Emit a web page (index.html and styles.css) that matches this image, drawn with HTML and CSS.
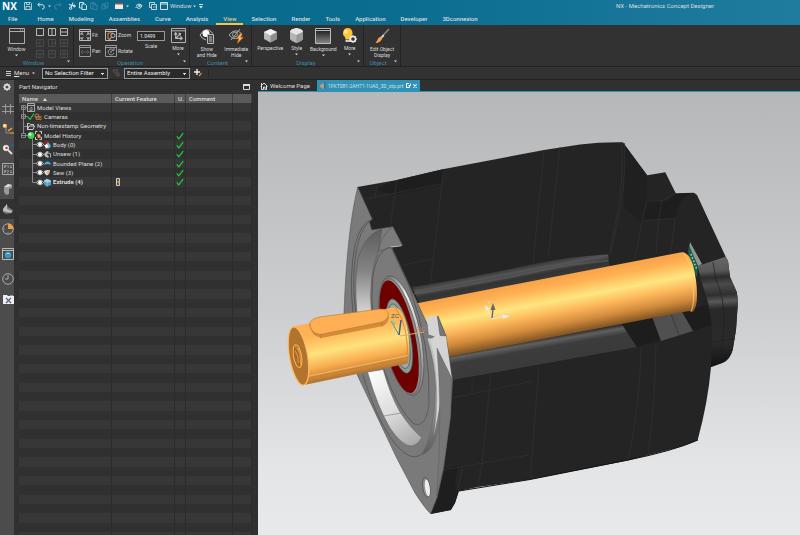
FILE: index.html
```html
<!DOCTYPE html>
<html lang="en">
<head>
<meta charset="utf-8">
<title>NX - Mechatronics Concept Designer</title>
<link rel="stylesheet" href="styles.css">
</head>
<body>
<svg class="defs" width="0" height="0" aria-hidden="true">
  <defs>
    <symbol id="caret" viewBox="0 0 4 3"><path d="M0 0h4L2 2.5z" fill="#ddd"/></symbol>
    <symbol id="tick" viewBox="0 0 8 8"><path d="M.8 4.4 2.8 6.8 7.2 1.2" fill="none" stroke="#1fd13a" stroke-width="1.2"/></symbol>
    <symbol id="eye" viewBox="0 0 8 8"><path d="M.3 4Q4-.6 7.7 4 4 8.6.3 4z" fill="#333" stroke="#ddd" stroke-width=".8"/><circle cx="4" cy="4" r="2" fill="#fff"/></symbol>
  </defs>
</svg>

<header class="top">
  <div class="titlebar">
    <strong class="logo">NX</strong>
    <div class="quick">
      <button aria-label="Save"><svg width="8" height="8" viewBox="0 0 8 8" fill="none" stroke="#cfe3ea"><path d="M.5.5h6l1 1v6h-7zM2.500.5v2h3v-2M2 7.500v-3h4v3" stroke-width=".8"/></svg></button>
      <button class="undo" aria-label="Undo"><svg width="8" height="8" viewBox="0 0 8 8" fill="none" stroke="#cfe3ea"><path d="M2.700.7.8 2.700l2 2M1 2.700h4q2.300.2 2.300 2.300T5 7.200"/></svg></button>
      <svg class="caret" width="3" height="3"><use href="#caret"/></svg>
      <button aria-label="Redo" disabled><svg width="8" height="8" viewBox="0 0 8 8" fill="none" stroke="#3b86a1"><path d="M5.300.7 7.200 2.700l-2 2M7 2.700H3Q.7 2.900.7 5T3 7.200"/></svg></button>
      <button class="cut" aria-label="Cut"><svg width="8" height="8" viewBox="0 0 8 8" fill="none" stroke="#e8f1f4"><path d="M5 .5 3.300 5M.8 2.500 6.800 4" /><circle cx="2.600" cy="6.200" r="1.200"/><circle cx="6.300" cy="4" r="1"/></svg></button>
      <button aria-label="Copy"><svg width="8" height="8" viewBox="0 0 8 8" fill="none" stroke="#e8f1f4" stroke-width=".9"><path d="M3 6H.5V.5h4V2M3 2h3l1.500 1.500v4H3z"/></svg></button>
      <button aria-label="Paste" disabled><svg width="8" height="8" viewBox="0 0 8 8" fill="none" stroke="#3b86a1" stroke-width=".9"><path d="M3 6.500H.5V1.500h5V3M2 1.500V.5h2v1M3 3h4v4.500H3z"/></svg></button>
      <button aria-label="Repeat" disabled><svg width="8" height="8" viewBox="0 0 8 8" fill="none" stroke="#3b86a1" stroke-width=".9"><path d="M1 3h3v4H1zM4 1h3v4H4zM2 1v2M6 5v2"/></svg></button>
      <button class="cut" aria-label="Layer"><svg width="8" height="8" viewBox="0 0 8 8"><path fill="#eee" d="M0 1h8v6H0z"/><path fill="#b84a3c" d="M0 1h8v1.500H0z"/></svg></button>
      <svg class="caret" width="3" height="3"><use href="#caret"/></svg>
      <button class="cut" aria-label="Touch mode"><svg width="8" height="8" viewBox="0 0 8 8" fill="none" stroke="#cfe3ea" stroke-width=".9"><path d="M1 3.500q3-3 6 0-1 3-3 3t-2-2L.5 6M4 2v3"/><circle cx="5" cy="3.500" r="1"/></svg></button>
      <button class="cut" aria-label="Switch window"><svg width="8" height="8" viewBox="0 0 8 8" fill="none" stroke="#cfe3ea" stroke-width=".9"><path d="M2 5.500H.5v-5h5V2M2.500 2.500h5v5h-5z"/><path d="M4 5h3" stroke="#e0a9a0"/></svg></button>
      <button class="winmenu"><svg width="8" height="8" viewBox="0 0 8 8" fill="none" stroke="#e8f1f4" stroke-width=".9"><path d="M.5.5h7v7h-7zM.5 2h7"/></svg>Window<svg class="caret" width="3" height="3"><use href="#caret"/></svg></button>
      <button aria-label="Customize"><svg width="4" height="5" viewBox="0 0 4 5"><path d="M0 0h4v1H0zM0 2h4L2 4.500z" fill="#ddd"/></svg></button>
    </div>
    <h1 class="title">NX - Mechatronics Concept Designer</h1>
  </div>
  <nav class="tabs">
    <a href="#">File</a><a href="#">Home</a><a href="#">Modeling</a><a href="#">Assemblies</a><a href="#">Curve</a><a href="#">Analysis</a><a href="#" class="active">View</a><a href="#">Selection</a><a href="#">Render</a><a href="#">Tools</a><a href="#">Application</a><a href="#">Developer</a><a href="#">3Dconnexion</a>
  </nav>
</header>

<div class="ribbon">
  <section class="group g-window">
    <div class="items">
      <button class="big"><svg width="16" height="16" viewBox="0 0 16 16" fill="none" stroke="#bbb"><path d="M.5.5h15v15H.5zM.5 3.500h15" stroke-width=".9"/><path d="M11 2h1m1 0h1"/></svg>Window<svg class="caret" width="3" height="3"><use href="#caret"/></svg></button>
      <div class="layouts">
        <button aria-label="Single"><svg width="8" height="8" viewBox="0 0 8 8" fill="none" stroke="#bbb"><path d="M.5.5h7v7h-7z"/></svg></button>
        <button aria-label="Side by side"><svg width="8" height="8" viewBox="0 0 8 8" fill="none" stroke="#bbb"><path d="M.5.5h7v7h-7zM4 .5v7"/></svg></button>
        <button aria-label="Stacked"><svg width="8" height="8" viewBox="0 0 8 8" fill="none" stroke="#bbb"><path d="M.5.5h7v7h-7zM.5 4h7"/></svg></button>
        <button disabled aria-label="Quad left"><svg width="8" height="8" viewBox="0 0 8 8" fill="none" stroke="#4a4a4a"><path d="M.5.5h7v7h-7zM4 .5v7M.5 4H4"/></svg></button>
        <button disabled aria-label="Quad right"><svg width="8" height="8" viewBox="0 0 8 8" fill="none" stroke="#4a4a4a"><path d="M.5.5h7v7h-7zM4 .5v7M4 4h4"/></svg></button>
        <button disabled aria-label="Quad"><svg width="8" height="8" viewBox="0 0 8 8" fill="none" stroke="#4a4a4a"><path d="M.5.5h7v7h-7zM4 .5v7M.5 4h7"/></svg></button>
        <button disabled aria-label="Top wide"><svg width="8" height="8" viewBox="0 0 8 8" fill="none" stroke="#4a4a4a"><path d="M.5.5h7v7h-7zM4 4v4M.5 4h7"/></svg></button>
        <button disabled aria-label="Bottom wide"><svg width="8" height="8" viewBox="0 0 8 8" fill="none" stroke="#4a4a4a"><path d="M.5.5h7v7h-7zM4 0v4M.5 4h7"/></svg></button>
        <button disabled aria-label="Grid"><svg width="8" height="8" viewBox="0 0 8 8" fill="none" stroke="#4a4a4a"><path d="M.5.5h7v7h-7zM4 0v8M.5 4h7"/></svg></button>
      </div>
    </div>
    <h2>Window<svg class="corner" width="3" height="3"><use href="#caret"/></svg></h2>
  </section>
  <section class="group g-operation">
    <div class="items">
      <div class="pairs">
        <button><svg width="12" height="12" viewBox="0 0 12 12" fill="none" stroke="#bbb"><path d="M.5.5h11v11H.5zM.5 2.500h11M2.500 4.500l2 1.500M9.500 4.500l-2 1.500M2.500 10l2-2M9.500 10l-2-2"/><path d="M2 6V4h2M8 4h2v2M2 8v2h2M8 10h2V8"/></svg>Fit</button>
        <button><svg width="12" height="12" viewBox="0 0 12 12" fill="none" stroke="#bbb"><path d="M.5.5h11v11H.5zM.5 2.500h11"/><path d="M8 4H3v6h3" stroke="#e08a3a"/><circle cx="8" cy="6.500" r="2"/><path d="M6.500 8 4.500 10.500"/></svg>Zoom</button>
        <button><svg width="12" height="12" viewBox="0 0 12 12" fill="none" stroke="#999"><path d="M.5.5h11v11H.5zM.5 2.500h11"/><path d="M2 7h8M4 5 2 7l2 2M8 5l2 2-2 2" stroke="#5c5c5c"/></svg>Pan</button>
        <button><svg width="12" height="12" viewBox="0 0 12 12" fill="none" stroke="#999"><path d="M.5.5h11v11H.5zM.5 2.500h11"/><path d="M8.500 5A3 3 0 1 0 9 8M9 3v2.500H6.500" /><circle cx="6" cy="7" r=".5"/></svg>Rotate</button>
      </div>
      <div class="scale"><input id="scale" value="1.0499"><label for="scale">Scale</label></div>
      <button class="big more-op"><svg width="15" height="15" viewBox="0 0 16 16" fill="none" stroke="#bbb"><path d="M.5.5h15v15H.5zM.5 3h15"/><path d="M5 5v6h7M3.500 7 5 5l1.500 2M10 9l2 2-2 2M5 11l5-5M8 5.500l2 .5v2" stroke-width="1.200"/></svg>More<svg class="caret" width="3" height="3"><use href="#caret"/></svg></button>
    </div>
    <h2>Operation<svg class="corner" width="3" height="3"><use href="#caret"/></svg></h2>
  </section>
  <section class="group g-content">
    <div class="items">
      <button class="big"><svg width="16" height="16" viewBox="0 0 16 16" fill="none" stroke="#bbb"><path d="M1 7Q7-3 14 5.500M1 7q2 4 6 5"/><circle cx="7" cy="5.500" r="3.500" fill="#fff" stroke="none"/><path d="M8.500 6.500h6v9h-6z" fill="#444"/><path d="M10 9h3m-3 2h3m-3 2h3"/></svg>Show<br>and Hide</button>
      <button class="big"><svg width="16" height="16" viewBox="0 0 16 16" fill="none" stroke="#aaa"><path d="M1 7q6-8 13-1-7 9-13 1zM3 12 12 1"/><circle cx="7" cy="6.500" r="2.500"/><path d="m12 6-3 4.500h2L9.500 15 15 9.500h-2.500L14 6z" fill="#ffc05a" stroke="#e8782a" stroke-width=".8"/></svg>Immediate<br>Hide</button>
    </div>
    <h2>Content<svg class="corner" width="3" height="3"><use href="#caret"/></svg></h2>
  </section>
  <section class="group g-display">
    <div class="items">
      <button class="big"><svg width="15" height="15" viewBox="0 0 15 15"><path d="M7.500 1 14 4v7l-6.500 3.500L1 11V4z" fill="#bbb"/><path d="M7.500 1 14 4 7.500 7.500 1 4z" fill="#f2f2f2"/><path d="M7.500 7.500 14 4v7l-6.500 3.500z" fill="#8f8f8f"/></svg>Perspective</button>
      <button class="big"><svg width="15" height="15" viewBox="0 0 15 15"><path d="M1 4Q1 1 7.500 0 14 1 14 4v7q-1 2-6.500 4Q2 13 1 11z" fill="#b4b4b4"/><path d="M1 4Q1 1 7.500 0 14 1 14 4L7.500 7z" fill="#e4e4e4"/><path d="M7.500 7 14 4v7q-1 2-6.500 4z" fill="#999"/></svg>Style<svg class="caret" width="3" height="3"><use href="#caret"/></svg></button>
      <button class="big"><svg width="16" height="16" viewBox="0 0 16 16"><defs><linearGradient id="bgi" x2="0" y2="1"><stop stop-color="#111"/><stop offset="1" stop-color="#888"/></linearGradient></defs><path d="M.5.5h15v15H.5z" fill="url(#bgi)" stroke="#bbb"/><path d="M.5 2.500h15" stroke="#bbb"/></svg>Background<svg class="caret" width="3" height="3"><use href="#caret"/></svg></button>
      <button class="big"><svg width="15" height="15" viewBox="0 0 15 15"><path d="M5.500 0a5 5 0 0 1 3 9l-.5 2H3.500L3 9a5 5 0 0 1 2.500-9z" fill="#ffc533"/><circle cx="4" cy="4" r="2" fill="#ffe9a0"/><path d="M3.500 11.500H8v2.500H3.500z" fill="#ccc"/><circle cx="11" cy="11" r="2.600" fill="#333" stroke="#eee" stroke-width="1.500"/><path d="M11 7v1.500m0 5V15M7 11h1.500m5 0H15M8.300 8.300l1 1m3.500 3.500 1 1m0-5.500-1 1m-3.500 3.500-1 1" stroke="#eee"/></svg>More<svg class="caret" width="3" height="3"><use href="#caret"/></svg></button>
    </div>
    <h2>Display<svg class="corner" width="3" height="3"><use href="#caret"/></svg></h2>
  </section>
  <section class="group g-object">
    <div class="items">
      <button class="big"><svg width="16" height="16" viewBox="0 0 16 16"><path d="M15 1 7.500 9" stroke="#8a8a8a" stroke-width="1.500"/><path d="M9 6.500 7 9l1 1 2.500-2z" fill="#ddd"/><path d="M7.500 8.500Q4 9 3.500 12L1.500 15q5 0 7-5z" fill="#f5a04a"/></svg>Edit Object<br>Display</button>
    </div>
    <h2>Object<svg class="corner" width="3" height="3"><use href="#caret"/></svg></h2>
  </section>
</div>

<div class="selbar">
  <button class="menu"><svg width="5" height="5" viewBox="0 0 5 5" stroke="#ccc"><path d="M0 .5h5M0 2.500h5M0 4.500h5"/></svg><span><u>M</u>enu</span><svg class="caret" width="3" height="3"><use href="#caret"/></svg></button>
  <select aria-label="Selection filter"><option>No Selection Filter</option></select>
  <svg class="dim" width="8" height="8" viewBox="0 0 8 8" fill="none" stroke="#555"><path d="M1 1h5L4 3.500v2M5 4h2v3H5zM1 1l2 3"/></svg>
  <select aria-label="Selection scope"><option>Entire Assembly</option></select>
  <button class="snap" aria-label="Snap point"><svg width="8" height="8" viewBox="0 0 8 8" fill="none"><path d="M3 0v6M0 3h6" stroke="#eee" stroke-width="1.400"/><path d="m5 7 2.500-3" stroke="#e08a3a" stroke-width="1.200"/></svg></button>
</div>

<main class="work">
  <aside class="side">
    <div><button class="gear" aria-label="Settings"><svg width="8" height="8" viewBox="0 0 8 8" fill="none" stroke="#eee"><circle cx="4" cy="4" r="2.300" stroke-width="1.400"/><path d="M4 0v1m0 6v1M0 4h1m6 0h1M1.200 1.200l.7.7m4.200 4.200.7.7m0-5.600-.7.7M1.900 6.100l-.7.700"/></svg></button></div>
    <div>
      <button aria-label="Assembly constraints"><svg width="12" height="12" viewBox="0 0 12 12" stroke="#999"><path d="M3.500 1v10M8.500 1v10M0 3.500h12M0 8.500h12"/></svg></button>
      <button aria-label="Physics navigator"><svg width="12" height="12" viewBox="0 0 12 12"><path d="M4 4v6h6" fill="none" stroke="#888"/><circle cx="3" cy="3" r="2.200" fill="#f9a23c"/><circle cx="2.500" cy="2.500" r="1.200" fill="#fff"/><path d="m6 8 4-3" stroke="#f9a23c" stroke-width="1.500"/><path d="M8 9h4v2H8z" fill="#a08040"/></svg></button>
      <button aria-label="Search"><svg width="12" height="12" viewBox="0 0 12 12"><path d="m6 7 4 4" stroke="#ddd" stroke-width="2"/><circle cx="4" cy="5" r="2.800" fill="#fff" stroke="#ccc"/><circle cx="4.500" cy="5" r="1.300" fill="#c33"/><path d="M8 2h4M10 0v4M8.500.5l3 3m0-3-3 3" stroke="#2c5f80" stroke-width=".8"/></svg></button>
      <button aria-label="Expressions"><svg width="12" height="12" viewBox="0 0 12 12" fill="none" stroke="#aaa"><path d="M.5.5h11v11H.5z"/><path d="M2.500 5V2.500h1.500v1.200H2.500M5.500 2.500h.7V5M8 3h2M8 4.500h2M2.500 10V7.500h1.500v1.200H2.500M5.300 7.500h1v1L5.300 9.800h1.200M8 8h2M8 9.500h2" stroke-width=".8"/></svg></button>
      <button aria-label="Reuse library"><svg width="12" height="12" viewBox="0 0 12 12"><path d="M2 4 6 1l4 1v3L7 6v5l-3 1-2-3z" fill="#999"/><path d="m2 4 4-3 4 1-4 2z" fill="#ddd"/></svg></button>
      <button class="on" aria-label="Part navigator"><svg width="12" height="12" viewBox="0 0 12 12"><path d="M1 6 5 1l1 3 5 3-1 3-6 1-3-2z" fill="#777"/><path d="m1 6 4-5v5l5 2-1 2-8-2z" fill="#bbb"/></svg></button>
      <button aria-label="Roles"><svg width="12" height="12" viewBox="0 0 12 12"><circle cx="6" cy="6" r="5.200" fill="none" stroke="#aaa"/><path d="M6 6V.5A5.500 5.500 0 0 1 11.500 6z" fill="#f59a3a"/><path d="M6 9.500v1M1.500 6h1" stroke="#aaa"/></svg></button>
    </div>
    <div><button aria-label="Web browser"><svg width="12" height="12" viewBox="0 0 12 12"><path d="M.5.5h11v11H.5zM.5 2.500h11" fill="none" stroke="#bbb"/><circle cx="6" cy="7" r="3.300" fill="#2f9ac4"/><path d="M4 6q2-2 4 0" stroke="#9adcf0" fill="none"/></svg></button></div>
    <div>
      <button aria-label="History"><svg width="12" height="12" viewBox="0 0 12 12" fill="none" stroke="#aaa"><circle cx="6" cy="6" r="5.300"/><path d="M6 2v4H3"/></svg></button>
      <button aria-label="System tools"><svg width="11" height="11" viewBox="0 0 11 11"><path d="M0 1h4l1 1h6v8H0z" fill="#eee"/><path d="m3 4 5 5M8 4 3 9" stroke="#567" stroke-width="1.200"/><path d="M7 1.500h3" stroke="#6ab"/></svg></button>
    </div>
  </aside>

  <section class="navigator">
    <div class="panelhead"><h2>Part Navigator</h2><button aria-label="Float"><svg width="7" height="6" viewBox="0 0 7 6"><path d="M.5.500h6v5h-6z" fill="none" stroke="#ddd"/><path d="M0 0h7v2H0z" fill="#ddd"/></svg></button></div>
    <div class="tree">
      <table>
        <colgroup><col class="c-name"><col class="c-feature"><col class="c-up"><col class="c-comment"><col></colgroup>
        <thead><tr><th>Name <svg class="sort" width="4" height="3" viewBox="0 0 4 3"><path d="M0 3h4L2 0z" fill="#ddd"/></svg></th><th>Current Feature</th><th>U.</th><th>Comment</th><th></th></tr></thead>
        <tbody>
          <tr><td><div class="node"><svg width="16" height="9" viewBox="0 0 16 9" fill="none" stroke="#888"><path d="M4.500 6.500V10M6 4.500h2M2.500 2.500h4v4h-4zM3 4.500h3M4.500 3v3"/><path d="M8.500.5h7v8h-7zM8.500 2.500h7" stroke="#aaa"/><path d="M12 4.500h1v3h-2v-2z" stroke="#999"/></svg>Model Views</div></td><td></td><td></td><td></td><td></td></tr>
          <tr><td><div class="node"><svg width="23" height="9" viewBox="0 0 23 9" fill="none" stroke="#888"><path d="M4.500 0v2.500M4.500 6.500V10M6 4.500h3M2.500 2.500h4v4h-4zM3 4.500h3M4.500 3v3"/><path d="m9 5 2 2.500L15 1.500" stroke="#1fd13a" stroke-width="1.200"/><circle cx="18" cy="4" r="2" stroke="#c87a3a"/><path d="M17 4.500h3v3h-3zM20 5l2-1v4l-2-1z" stroke="#a8703f"/></svg>Cameras</div></td><td></td><td></td><td></td><td></td></tr>
          <tr><td><div class="node"><svg width="16" height="9" viewBox="0 0 16 9" fill="none" stroke="#888"><path d="M4.500 0v10M4.500 4.500h4"/><path d="M8.500 7.500v-6h2l1 1h3V4M8.500 7.500 10 4h5.500L14 7.500z" stroke="#ccc"/></svg>Non-timestamp Geometry</div></td><td></td><td></td><td></td><td></td></tr>
          <tr><td><div class="node"><svg width="23" height="9" viewBox="0 0 23 9" fill="none" stroke="#888"><path d="M4.500 0v2.500M6 4.500h3M2.500 2.500h4v4h-4zM3 4.500h3"/><circle cx="12" cy="4.500" r="3.400" fill="#3fd34c" stroke="none"/><circle cx="11" cy="3.300" r="1.500" fill="#c8f7c8" stroke="none"/><path d="M16.500 3V.5h2M20.500.5h2V3M16.500 6v2.500h2M20.500 8.500h2V6" stroke="#ccc"/><path d="m18 3 3 .5 1 3-3 .5z" fill="#f2a04c" stroke="none"/></svg>Model History</div></td><td></td><td><svg class="tick" width="8" height="8"><use href="#tick"/></svg></td><td></td><td></td></tr>
          <tr><td><div class="node"><svg width="32" height="9" viewBox="0 0 32 9"><path d="M13.500-1v11M13.500 4.500h4" stroke="#888" fill="none"/><use href="#eye" x="17" y=".5" width="8" height="8"/><path d="m25 1 4-.500v4l-4 .500z" fill="#8c2424"/><path d="m27 5 2-3 3 4-2 2.500h-4z" fill="#6fb4d8"/><path d="m25 5.500 3-1.500 1.500 3-2 1z" fill="#fff"/></svg>Body (0)</div></td><td></td><td><svg class="tick" width="8" height="8"><use href="#tick"/></svg></td><td></td><td></td></tr>
          <tr><td><div class="node"><svg width="32" height="9" viewBox="0 0 32 9"><path d="M13.500-1v11M13.500 4.500h4" stroke="#888" fill="none"/><use href="#eye" x="17" y=".5" width="8" height="8"/><path d="m25 4 3-3 2 1-2 2.500 2 2-1 1.500-3-1.500z" fill="#bbb"/><path d="M29.500 3.500h2v4" stroke="#aaa" fill="none"/></svg>Unsew (1)</div></td><td></td><td><svg class="tick" width="8" height="8"><use href="#tick"/></svg></td><td></td><td></td></tr>
          <tr><td><div class="node"><svg width="32" height="9" viewBox="0 0 32 9"><path d="M13.500-1v11M13.500 4.500h4" stroke="#888" fill="none"/><use href="#eye" x="17" y=".5" width="8" height="8"/><path d="M25 6q1-3.500 3.500-3.500T32 6q-3.500-2-7 0z" fill="#3db4e6"/></svg>Bounded Plane (2)</div></td><td></td><td><svg class="tick" width="8" height="8"><use href="#tick"/></svg></td><td></td><td></td></tr>
          <tr><td><div class="node"><svg width="32" height="9" viewBox="0 0 32 9"><path d="M13.500-1v11M13.500 4.500h4" stroke="#888" fill="none"/><use href="#eye" x="17" y=".5" width="8" height="8"/><path d="m25 3 3-1 3 0-1 4-2 1.500-2-1.500z" fill="#ddd"/><path d="m28 3.500 3-1.500-.5 3-2 1z" fill="#f0a060"/></svg>Sew (3)</div></td><td></td><td><svg class="tick" width="8" height="8"><use href="#tick"/></svg></td><td></td><td></td></tr>
          <tr class="current"><td><div class="node"><svg width="32" height="9" viewBox="0 0 32 9"><path d="M13.500-1v5.500h4" stroke="#888" fill="none"/><use href="#eye" x="17" y=".5" width="8" height="8"/><path d="m25 3 3-2 4 2v4l-4 1.500-3-2z" fill="#4fa0c4"/><path d="m25 3 3-2 4 2-3.500 1.500zM28 5v3.500" fill="#a8d4e4" stroke="#b8dcea" stroke-width=".5"/></svg>Extrude (4)</div></td><td><svg class="feat" width="4" height="8" viewBox="0 0 4 8"><path d="M.5.500h3v7h-3z" fill="#555" stroke="#ccc"/><path d="M1.500 3h2v2h-2z" fill="#f90"/></svg></td><td><svg class="tick" width="8" height="8"><use href="#tick"/></svg></td><td></td><td></td></tr>
          <tr class="rest"><td></td><td></td><td></td><td></td><td></td></tr>
        </tbody>
      </table>
    </div>
  </section>

  <section class="view">
    <div class="doctabs">
      <a href="#"><svg width="8" height="8" viewBox="0 0 8 8" fill="none" stroke="#ddd"><path d="M.5 4.500 4 1l3.500 3.500M1.500 4v3.500h2V5h1.500v2.500h1.500V4M1.500 3V1"/></svg>Welcome Page</a>
      <a href="#" class="active"><svg width="7" height="7" viewBox="0 0 7 7"><path d="m1 3 4-2v6L1 5z" fill="#b98"/><path d="M5 0h1.500v7L5 6z" fill="#567"/></svg><span>1FKT081-2AH71-1UA0_3D_stp.prt</span><svg width="5" height="5" viewBox="0 0 5 5" fill="none" stroke="#fff"><path d="M3 .5H.5v4h3V3M2.500 2.500h2v-2"/></svg><svg width="4" height="4" viewBox="0 0 5 5" stroke="#fff" stroke-width="1.400"><path d="m.5.500 4 4m0-4-4 4"/></svg></a>
    </div>
    <svg class="model" viewBox="258 92 542 443" preserveAspectRatio="xMidYMid slice" role="img" aria-label="Servo motor section model">
      <defs>
        <linearGradient id="sky" x2="0" y2="1"><stop stop-color="#b6b7b8"/><stop offset=".5" stop-color="#cdcecf"/><stop offset=".85" stop-color="#e4e5e6"/><stop offset="1" stop-color="#e8e9ea"/></linearGradient>
        <linearGradient id="shaft" gradientUnits="userSpaceOnUse" x1="560" y1="276" x2="571" y2="334"><stop stop-color="#f8a348"/><stop offset=".15" stop-color="#ffb052"/><stop offset=".4" stop-color="#ffe680"/><stop offset=".6" stop-color="#fdb65a"/><stop offset=".8" stop-color="#d38b3d"/><stop offset="1" stop-color="#7c5222"/></linearGradient>
        <linearGradient id="stub" gradientUnits="userSpaceOnUse" x1="345" y1="315" x2="357" y2="376"><stop stop-color="#ffae50"/><stop offset=".25" stop-color="#ffb557"/><stop offset=".52" stop-color="#ffe27c"/><stop offset=".75" stop-color="#f9ac50"/><stop offset="1" stop-color="#a86c2c"/></linearGradient>
        <linearGradient id="bore" gradientUnits="userSpaceOnUse" x1="0" y1="228" x2="0" y2="314"><stop stop-color="#5c5c5c"/><stop offset=".5" stop-color="#848484"/><stop offset="1" stop-color="#d8d8d8"/></linearGradient>
        <linearGradient id="bore2" gradientUnits="userSpaceOnUse" x1="372" y1="375" x2="415" y2="445"><stop stop-color="#fafafa"/><stop offset=".5" stop-color="#dedede"/><stop offset="1" stop-color="#a8a8a8"/></linearGradient>
        <linearGradient id="rim" gradientUnits="userSpaceOnUse" x1="0" y1="330" x2="0" y2="455"><stop stop-color="#d0d0d0"/><stop offset=".5" stop-color="#a0a0a0"/><stop offset="1" stop-color="#5c5c5c"/></linearGradient>
        <linearGradient id="sheen" gradientUnits="userSpaceOnUse" x1="500" y1="268" x2="504" y2="289"><stop stop-color="#262626"/><stop offset=".35" stop-color="#565656"/><stop offset=".65" stop-color="#333"/><stop offset="1" stop-color="#3a3a3a"/></linearGradient>
        <linearGradient id="ledge" gradientUnits="userSpaceOnUse" x1="540" y1="339" x2="544" y2="362"><stop stop-color="#303030"/><stop offset=".15" stop-color="#606060"/><stop offset=".4" stop-color="#3c3c3c"/><stop offset="1" stop-color="#3a3a3a"/></linearGradient>
        <linearGradient id="bracket" gradientUnits="userSpaceOnUse" x1="715" y1="258" x2="722" y2="364"><stop stop-color="#666"/><stop offset=".12" stop-color="#585858"/><stop offset=".18" stop-color="#2c2c2c"/><stop offset=".25" stop-color="#4a4a4a"/><stop offset=".35" stop-color="#303030"/><stop offset=".41" stop-color="#585858"/><stop offset=".48" stop-color="#292929"/><stop offset=".8" stop-color="#2a2a2a"/><stop offset="1" stop-color="#151515"/></linearGradient>
        <linearGradient id="ring" gradientUnits="userSpaceOnUse" x1="385" y1="280" x2="420" y2="395"><stop stop-color="#777"/><stop offset=".2" stop-color="#eee"/><stop offset=".6" stop-color="#bbb"/><stop offset="1" stop-color="#777"/></linearGradient>
      </defs>
      <path fill="url(#sky)" d="M-400 92h1800v443H-400z"/>
      <path fill="#242424" d="M357.500 187 397 180 444 169 544 150 580 144.500Q600 142 622.700 142.300L647.300 175.300 665.300 172.300 675.700 193.300 694 192.700 697 195 725.700 256.700 728 261 730 277 736.700 292 738 301 736 330 732.700 350Q730 359 723 362.500L711 367Q708 402 697.700 440 690 444 676 448L628 460.500 530 479.500 478 487 458.700 491 455 503 450.700 510 430.700 513.700 400 400z"/>
      <path fill="#1e1e1e" d="m375 189 22-9 47-11-3 16-48 10zM642 218l5-17 22 0 6-7 19-1q-16 2-18 25l-33 3zM443.500 469l14-3-3 24 4-1-8 21-20 4 7-17zM437 497l22-6-4 12-4 7-20 4z"/>
      <path fill="#202020" d="m623 142.500 24 33-1 26-5 20-17-14q2-35-1-65z"/>
      <g fill="none" stroke="#323232" stroke-width=".7">
        <path d="M443.500 169.500 440 200l-11 96 4 5M397 180l-7 47M366 199l74-15M377 186l-2 11M544 150l-11 115 0 10M560 147l-12 110M403 265l30-6M622 143q2 40-7 83l-6 29M624.500 143q2 42-8 84l-6 28M642 221l-7 38M647 202l-5 19 33-3-4 35M662 200q-4 20-6 53M661 201l15-8M647 201l15 0M452 398l44-9 37-8M491 374l-9 91M472 380v13M539 366l-9 114M443 470l86-15M462 469l-4 21M482 464l-4 23M641 347q-1 60-13 113M656 344q-1 60-8 111"/>
      </g>
      <path fill="none" stroke="#111" d="M459 491l71-11.500 98-19.500q45-9 70-20"/>
      <path fill="url(#sheen)" d="M412 287Q470 278 533 264 570 256 608 254.500l2 12L420 304z"/>
      <path fill="none" stroke="#6a6a6a" opacity=".4" stroke-width="2" d="M414 294q60-9 120-22 40-9 74-11"/>
      <path fill="url(#ledge)" d="M448 357 621.700 324 637 347 452 380z"/>
      <path fill="#1d1d1d" d="m622 324 90-20 0 21-75 22z"/>
      <path fill="#505050" d="m652.500 318 29-7L693 331l-32 10z"/>
      <path fill="none" stroke="#303030" stroke-width=".7" d="m671 314 8 21"/>
      <path fill="url(#bracket)" d="m697.700 266 28-9.300 2.300 4 2 16 6.700 15 1.300 9-2 29-3.300 20q-2.700 10-9.700 13L711 367l1-42-4-23-7-22z"/>
      <path fill="none" stroke="#202020" stroke-width=".7" d="m713 262 3 18q8 16 8 40 0 28-7 44M711 343q14-3 24-4"/>
      <path fill="#949494" d="m690 242 12 22-4 2-9-18z"/>
      <path fill="#17634a" d="m689 245 9 21-1 11-5-8-4-17z"/>
      <path stroke="#a9cfc0" stroke-width="1.500" stroke-dasharray="1.500 2" d="m691 254 6 16"/>
      <path fill="url(#shaft)" d="M416 303.500 680 252.500Q688 250 693 265q4 16 4 30 0 12-4 17l-4-1L446 357.500z"/>
      <path fill="none" stroke="#ffcf7a" stroke-width=".8" d="M683 252.500q8 8 10 30t-2 29"/>

      <path fill="#7a7a7a" stroke="#555" stroke-width=".6" d="M357.700 187.300 372.300 219.300 369.300 221.700 371.700 230 392.700 226.700 402.300 245.300 391.700 247.300 430 330 438 316 446 336 452.700 380 450 417 443.300 470 437.300 497 430.700 513.700Q426 510 415 493L396.700 458 357.300 375 344 313Q347 230 357.700 187.300z"/>
      <path fill="none" stroke="#4c4c4c" stroke-width=".7" d="M372 219.300Q361 222 355 245 349 275 353 314M369 222Q357 232 354 270q-1 25 2 44M363 375q12 40 27 62 14 20 25 20 20-4 23-46 1-25-6-55"/>
      <path fill="url(#bore)" stroke="#555" stroke-width=".6" d="M381.700 229Q365 235 358 258 354 280 357 314l14.500 0Q368 275 378.500 251 380 240 381.700 229z"/>
      <path fill="#7c7c7c" stroke="#555" stroke-width=".6" d="m392.700 226.700 9.600 18.600-10.600 2-13 4q1-14 14-24.600z"/>
      <path fill="#c4c4c4" d="m402 245.300-1 1-9 1-3-.500z"/>
      <path fill="#7a7a7a" stroke="#4c4c4c" stroke-width=".7" d="M391 247.500Q378 248 373 275 368 320 384 370q14 40 30 54 12 4 15-20 2-60-20-118z"/>
      <path fill="url(#bore2)" stroke="#666" stroke-width=".6" d="M367.500 372q10 35 22.500 56 12 18 21.700 18 6-1 10-8.500-10-8-22-26-10-18-16.500-42z"/>
      <path fill="none" stroke="#777" stroke-width=".6" d="m384 416 17-3M411 424q10 3 17-9l0-15M421 437q6-10 7-22"/>
      <path fill="url(#rim)" stroke="#666" stroke-width=".5" d="M427 338q8 25 8.500 50-1 45-14 67 11-3 16-24 7-40-4-93z"/>
      <g transform="rotate(-12 400 336)">
        <ellipse cx="401.500" cy="336" rx="19" ry="61" fill="url(#ring)" stroke="#555" stroke-width=".7"/>
        <ellipse cx="400" cy="336.500" rx="17.500" ry="59" fill="#8c8c8c" stroke="#555" stroke-width=".6"/>
        <ellipse cx="399" cy="336.500" rx="16" ry="57.500" fill="#6e0000"/>
        <ellipse cx="399.500" cy="336" rx="11" ry="38" fill="#8b9a93" stroke="#444" stroke-width=".7"/>
        <ellipse cx="399" cy="336" rx="9" ry="33" fill="#9ca8a2" stroke="#555" stroke-width=".7"/>
      </g>
      <path fill="#d4d4d4" d="m426.700 316.700 10.600-.7 3 19.500 5.700.5 5.700 42.500-14-28 3 50-7 36q8-50-3-97l4-3-6-2z"/>
      <path fill="#777" stroke="#555" stroke-width=".4" d="m437.300 316 8.700 20-6-.5zM437 348l14.700 30-1 38-7 50-7 30q6-80 .3-148z"/>
      <path fill="url(#stub)" d="M293 326.500 393 307.500q8-2 13 15 6 24 1.500 41L304 385z"/>
      <path fill="none" stroke="#c5812f" stroke-width=".8" d="M306 378.500 408 357.500M395 307q15 20 12 56"/>
      <path fill="none" stroke="#ffc065" stroke-width=".8" d="M307 376.500 408 355.500"/>
      <g transform="rotate(-10 298.500 356)">
        <ellipse cx="298.500" cy="356" rx="9" ry="29.500" fill="#b0742f" stroke="#ffb95e" stroke-width="1.200"/>
        <ellipse cx="297.500" cy="356" rx="4" ry="11.500" fill="#a56a2a" stroke="#ffb552"/>
        <path fill="none" stroke="#f3a64c" stroke-width=".8" d="M297 346q5 6 2 19M299 348q4 7 1 16M296 350q3 6 1 13"/>
      </g>
      <path fill="#d18c3a" d="M309 324q2 12 12 14l62-12q6-3 6-11z"/>
      <path fill="#ffb055" stroke="#b87527" stroke-width=".6" d="M310 322q3-4 10-5l60-8q8 0 8.500 5 0 5-6.500 8l-62 12.500q-11-2-10-12.500z"/>
      <path fill="none" stroke="#b87527" stroke-width=".6" d="M320.500 334.500v4M382 322.500v4"/>
      <g transform="rotate(-8 426.300 487.300)"><ellipse cx="426.300" cy="487.300" rx="3.600" ry="10" fill="#8d8d8d" stroke="#444" stroke-width=".6"/><ellipse cx="427.300" cy="488" rx="2.400" ry="8.500" fill="#eee"/></g>
      <g fill="none">
        <path stroke="#4aa08a" d="m399 335-8-14"/><path stroke="#2f5f93" stroke-width="1.500" d="m399 335 2-15"/><path stroke="#e8a070" stroke-width="1.200" d="m400 336 24-4"/>
        <path fill="#7fc9a4" d="m391 320 5 3-2 3z"/>
        <path stroke="#e8e8e8" d="m492 319-5-11M492 319l10-2"/><path stroke="#666" stroke-width="1.400" d="m492 318 1-10"/>
        <path fill="#eee" d="m485 305 5 4-4 2zM502 314.500l8 1.500-7 3z"/><path fill="#666" d="m490.500 310 2.500-7 2.500 7z"/>
      </g>
      <text class="axis" x="391" y="318" fill="#2b5c7c">ZC</text>
      <text class="axis" x="417" y="331" fill="#d08050">XC</text>
      <text class="axis" x="487" y="304" fill="#e8dcc0">Y</text>
      <text class="axis" x="508" y="313" fill="#f4e4b8">Z</text>
    </svg>
  </section>
</main>
</body>
</html>
```
FILE: styles.css
```css
* { box-sizing: border-box; }

body {
  margin: 0;
  height: 100vh;
  display: flex;
  flex-direction: column;
  overflow: hidden;
  background: #2b2b2b;
  color: #dedede;
  font: 6px/8px Roboto, "Liberation Sans", sans-serif;
}

h1, h2 { margin: 0; font: inherit; }
button { border: 0; padding: 0; background: none; color: inherit; font: inherit; }
a { color: inherit; text-decoration: none; }
svg { display: block; flex: none; overflow: visible; }
.defs { position: absolute; }

/* Title bar and ribbon tabs */
.top {
  height: 25px;
  flex: none;
  background: linear-gradient(90deg, #066789, #0b6d90 50%, #1f7c9f);
}
.titlebar { display: flex; align-items: center; height: 12px; padding-left: 2px; }
.logo { font: bold 10px/12px "Open Sans", sans-serif; color: #fff; width: 22px; }
.quick { display: flex; align-items: center; gap: 3px; }
.quick .cut { margin-left: 3px; }
.quick .undo { margin-left: 2px; }
.winmenu { display: flex; align-items: center; gap: 2px; }
.title { margin-left: auto; padding-right: 86px; }
.tabs { display: flex; gap: 1px; height: 13px; padding-left: 1px; }
.tabs a { height: 13px; padding: 3px 7px 0; border-bottom: 2px solid transparent; font-weight: 500; }
.tabs a:first-child { padding-right: 12px; }
.tabs .active { color: #e6c583; border-bottom-color: #f4c542; }

/* Ribbon */
.ribbon { display: flex; flex: none; height: 42px; background: #323232; border-bottom: 1px solid #222; font-size: 5px; line-height: 6px; }
.group { display: flex; flex-direction: column; justify-content: space-between; padding-top: 3px; border-right: 1px solid #242424; }
.items { display: flex; align-items: flex-start; }
.group h2 { position: relative; padding-right: 8px; text-align: center; color: #3a8ba6; line-height: 7px; font-size: 6px; }
.corner { position: absolute; right: 3px; top: 1px; }
.g-window { width: 74px; padding-left: 2px; }
.g-operation { width: 116px; padding-left: 5px; }
.g-content { width: 62px; padding-left: 2px; }
.g-display { width: 112px; padding-left: 5px; }
.g-object { width: 37px; }
.big { display: block; flex: 1; text-align: center; white-space: nowrap; }
.big svg { margin: 0 auto 2px; }
.big .caret { margin: 2px auto 0; }
.g-window .big { flex: none; width: 29px; }
.layouts { display: grid; grid-template-columns: repeat(3, 8px); gap: 3px 4px; margin-left: 5px; }
.pairs { display: grid; grid-template-columns: 26px 32px; row-gap: 4px; padding-top: 1px; }
.pairs button { display: flex; align-items: center; gap: 1px; }
.scale { width: 28px; padding-top: 3px; text-align: center; }
.scale input { display: block; width: 28px; height: 10px; margin-bottom: 2px; padding: 0 2px; border: 1px solid #999; background: #2a2a2a; color: #eee; font: inherit; }
.more-op { flex: none; width: 26px; }

/* Selection bar */
.selbar { display: flex; flex: none; align-items: center; height: 13px; padding-left: 6px; background: #323232; border-bottom: 1px solid #222; }
.menu { display: flex; align-items: center; gap: 3px; width: 36px; }
.selbar select {
  appearance: none;
  width: 66px;
  height: 11px;
  padding: 0 2px;
  border: 1px solid #999;
  border-radius: 0;
  background:
    linear-gradient(#ddd, #ddd) no-repeat right 3px top 4px / 3px 1px,
    linear-gradient(#ddd, #ddd) no-repeat right 4px top 5px / 1px 1px,
    #2a2a2a;
  color: #eee;
  font: inherit;
}
.dim { margin: 0 4px; }
.selbar .snap { margin-left: 4px; padding-right: 6px; border-right: 1px solid #262626; }

/* Work area */
.work { display: flex; flex: 1; min-height: 0; }
.side { display: flex; flex: none; flex-direction: column; gap: 5px; width: 14px; background: #4c4c4c; }
.side button { display: flex; align-items: center; justify-content: center; width: 14px; height: 20px; padding-left: 2px; }
.side .gear { height: 14px; padding: 0; }
.side .on { background: #323232; }

.navigator { display: flex; flex: none; flex-direction: column; width: 244px; padding: 0 6px 0 5px; background: #303030; }
.panelhead { display: flex; flex: none; align-items: center; justify-content: space-between; height: 14px; padding-right: 2px; }
.tree {
  flex: 1;
  min-height: 0;
  background: repeating-linear-gradient(#373737 0 9px, #303030 9px 18px, #373737 18px 28px, #303030 28px 37px, #373737 37px 46px, #303030 46px 56px) 0 9px no-repeat;
}
table { width: 100%; height: 100%; border-collapse: separate; border-spacing: 0; table-layout: fixed; }
.c-name { width: 93px; }
.c-feature { width: 63px; }
.c-up { width: 11px; }
.c-comment { width: 47px; }
th { height: 9px; padding: 0 3px; background: #5a5a5a; border-right: 1px solid #404040; font-weight: 500; text-align: left; white-space: nowrap; line-height: 8px; }
.sort { display: inline-block; margin-left: 4px; }
td { height: 9px; padding: 0; border-right: 1px solid #2b2b2b; line-height: 8px; white-space: nowrap; }
tr:nth-child(3n) td { height: 10px; }
tbody tr.rest td { height: auto; }
.node { display: flex; align-items: center; gap: 2px; height: 9px; }
.tick { margin-left: 1px; }
.feat { margin-left: 4px; }
.current { font-weight: bold; }

.view { display: flex; flex: 1; flex-direction: column; min-width: 0; }
.doctabs { display: flex; flex: none; height: 12px; background: #303030; border-bottom: 1px solid #2f93b8; }
.doctabs a { display: flex; align-items: center; gap: 2px; padding: 0 3px 0 2px; }
.doctabs .active { margin-left: 4px; background: #2f93b8; }
.doctabs span { font-size: 5px; margin-right: 1px; }
.model { flex: 1; width: 100%; min-height: 0; overflow: hidden; }
.axis { font: 6px "Liberation Sans", sans-serif; }
```
